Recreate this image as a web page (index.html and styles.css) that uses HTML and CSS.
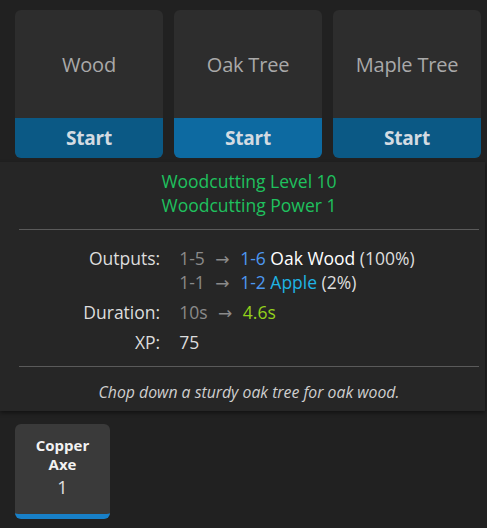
FILE: index.html
```html
<!DOCTYPE html>
<html>
<head>
<meta charset="utf-8">
<link rel="stylesheet" href="styles.css">
</head>
<body>
<div class="page">
  <div class="cards">
    <div class="card">
      <div class="card-name">Wood</div>
      <div class="start">Start</div>
    </div>
    <div class="card">
      <div class="card-name">Oak Tree</div>
      <div class="start hover">Start</div>
    </div>
    <div class="card">
      <div class="card-name">Maple Tree</div>
      <div class="start">Start</div>
    </div>
  </div>
  <div class="tools">
    <div class="tool">
      <div class="tool-name">Copper<br>Axe</div>
      <div class="tool-count">1</div>
    </div>
  </div>

  <div class="tooltip">
    <div class="req">
      <div>Woodcutting Level 10</div>
      <div>Woodcutting Power 1</div>
    </div>
    <div class="divider"></div>
    <div class="stats">
      <div class="label">Outputs:</div>
      <div class="value">
        <div class="line"><span class="old">1-5 <span class="arrow">&rarr;</span></span> <span class="blue">1-6</span> <span class="white">Oak Wood</span> (100%)</div>
        <div class="line"><span class="old">1-1 <span class="arrow">&rarr;</span></span> <span class="blue">1-2</span> <span class="cyan">Apple</span> (2%)</div>
      </div>
      <div class="label">Duration:</div>
      <div class="value"><div class="line"><span class="old">10s <span class="arrow">&rarr;</span></span> <span class="lime">4.6s</span></div></div>
      <div class="label">XP:</div>
      <div class="value"><div class="line">75</div></div>
    </div>
    <div class="divider"></div>
    <div class="desc">Chop down a sturdy oak tree for oak wood.</div>
  </div>
</div>
</body>
</html>
```

FILE: styles.css
```css
* { box-sizing: border-box; }
html, body {
  margin: 0;
  background: #212121;
  font-family: "Open Sans", "Noto Sans", sans-serif;
  color: #dddddd;
}
.page {
  position: relative;
  width: 487px;
  height: 528px;
  padding: 10px 15px;
}
.cards {
  display: grid;
  grid-template-columns: 148px 148px 148px;
  column-gap: 11px;
}
.card {
  background: #2d2d2d;
  border-radius: 6px;
  overflow: hidden;
  display: flex;
  flex-direction: column;
}
.card-name {
  height: 108px;
  display: flex;
  align-items: center;
  justify-content: center;
  font-size: 20px;
  color: #a9a9a9;
  letter-spacing: -0.2px;
}
.start {
  height: 40px;
  background: #0b5985;
  color: #d3dbe2;
  font-weight: 700;
  font-size: 19px;
  display: flex;
  align-items: center;
  justify-content: center;
  letter-spacing: -0.2px;
}
.start.hover { background: #0d6aa1; }
.tools {
  display: flex;
  gap: 10px;
  margin-top: 266px;
}
.tool {
  width: 95px;
  height: 95px;
  background: #3a3a3a;
  border-radius: 6px;
  border-bottom: 5px solid #1880c8;
  display: flex;
  flex-direction: column;
  align-items: center;
  padding-top: 12px;
}
.tool-name {
  font-size: 15px;
  font-weight: 700;
  color: #f2f2f2;
  line-height: 19px;
  text-align: center;
}
.tool-count {
  font-size: 18px;
  color: #e0e0e0;
  line-height: 26px;
}
.tooltip {
  position: absolute;
  left: 0;
  top: 162px;
  width: 485px;
  height: 249px;
  background: #262626;
  box-shadow: 0 2px 4px rgba(0,0,0,0.45);
  padding: 7px 6px 0 19px;
}
.req {
  text-align: center;
  color: #1fc15e;
  font-size: 17.5px;
  line-height: 24px;
}
.divider {
  height: 1px;
  background: #5a5a5a;
  margin: 12px 0 0;
}
.stats {
  display: grid;
  grid-template-columns: auto auto;
  justify-content: center;
  column-gap: 19px;
  row-gap: 6px;
  margin: 16px 0 11px;
  font-size: 17.5px;
  line-height: 24px;
}
.label {
  text-align: right;
  color: #dddddd;
}
.value { color: #dddddd; white-space: nowrap; }
.line { height: 24px; }
.old { color: #8a8a8a; }
.arrow {
  font-family: "DejaVu Sans", sans-serif;
  font-size: 17px;
  line-height: 1;
  margin: 0 6px;
}
.blue { color: #4d98f0; }
.cyan { color: #1fb3e3; }
.white { color: #ffffff; }
.lime { color: #93d11c; }
.desc {
  text-align: center;
  font-style: italic;
  font-size: 15.8px;
  color: #cfcfcf;
  line-height: 24px;
  margin-top: 13px;
}
```
